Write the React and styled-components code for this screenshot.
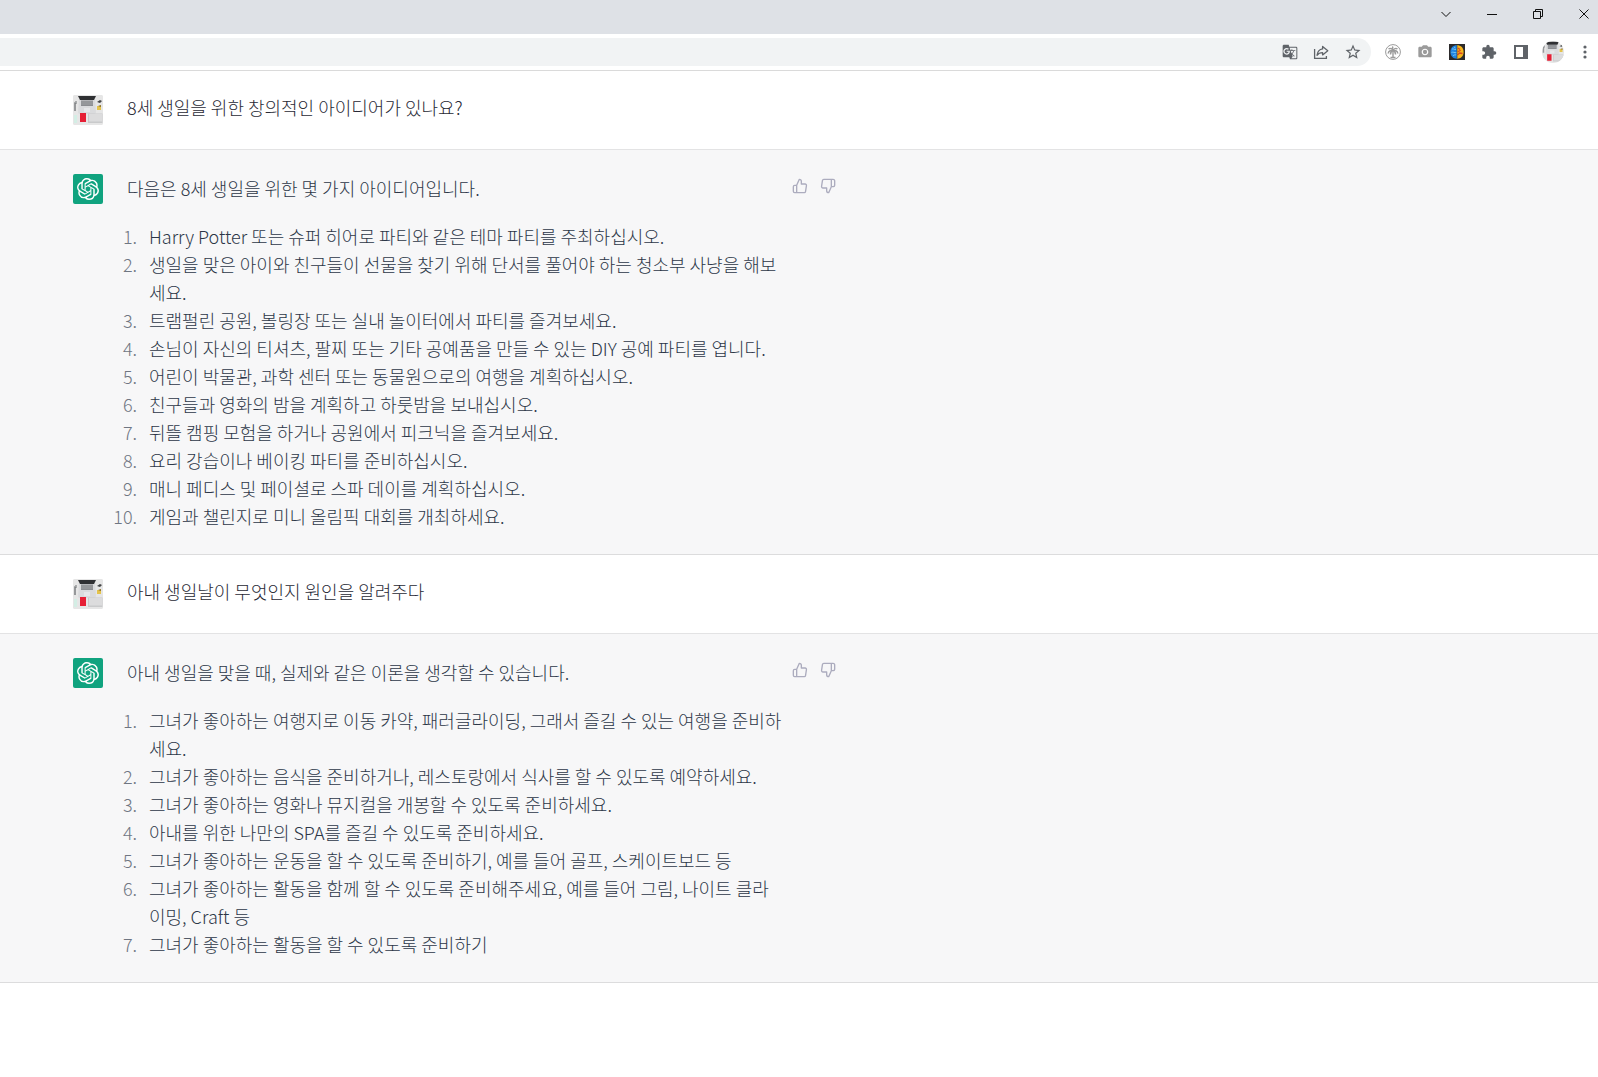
import styled, { createGlobalStyle } from "styled-components";
import { FiThumbsUp, FiThumbsDown } from "react-icons/fi";
import { MdExtension, MdGTranslate, MdPhotoCamera, MdStarBorder } from "react-icons/md";
import { SiOpenai } from "react-icons/si";

const conversation = [
  { role: "user", text: "8세 생일을 위한 창의적인 아이디어가 있나요?" },
  {
    role: "assistant",
    text: "다음은 8세 생일을 위한 몇 가지 아이디어입니다.",
    items: [
      "Harry Potter 또는 슈퍼 히어로 파티와 같은 테마 파티를 주최하십시오.",
      "생일을 맞은 아이와 친구들이 선물을 찾기 위해 단서를 풀어야 하는 청소부 사냥을 해보세요.",
      "트램펄린 공원, 볼링장 또는 실내 놀이터에서 파티를 즐겨보세요.",
      "손님이 자신의 티셔츠, 팔찌 또는 기타 공예품을 만들 수 있는 DIY 공예 파티를 엽니다.",
      "어린이 박물관, 과학 센터 또는 동물원으로의 여행을 계획하십시오.",
      "친구들과 영화의 밤을 계획하고 하룻밤을 보내십시오.",
      "뒤뜰 캠핑 모험을 하거나 공원에서 피크닉을 즐겨보세요.",
      "요리 강습이나 베이킹 파티를 준비하십시오.",
      "매니 페디스 및 페이셜로 스파 데이를 계획하십시오.",
      "게임과 챌린지로 미니 올림픽 대회를 개최하세요.",
    ],
  },
  { role: "user", text: "아내 생일날이 무엇인지 원인을 알려주다" },
  {
    role: "assistant",
    text: "아내 생일을 맞을 때, 실제와 같은 이론을 생각할 수 있습니다.",
    items: [
      "그녀가 좋아하는 여행지로 이동 카약, 패러글라이딩, 그래서 즐길 수 있는 여행을 준비하세요.",
      "그녀가 좋아하는 음식을 준비하거나, 레스토랑에서 식사를 할 수 있도록 예약하세요.",
      "그녀가 좋아하는 영화나 뮤지컬을 개봉할 수 있도록 준비하세요.",
      "아내를 위한 나만의 SPA를 즐길 수 있도록 준비하세요.",
      "그녀가 좋아하는 운동을 할 수 있도록 준비하기, 예를 들어 골프, 스케이트보드 등",
      "그녀가 좋아하는 활동을 함께 할 수 있도록 준비해주세요, 예를 들어 그림, 나이트 클라이밍, Craft 등",
      "그녀가 좋아하는 활동을 할 수 있도록 준비하기",
    ],
  },
];

const DeskPhoto = ({ size }) => (
  <svg width={size} height={size} viewBox="0 0 30 30" aria-hidden="true">
    <rect width="30" height="30" fill="#e6e6e6" />
    <path d="M6 4h16l1 13q0 2-2 2H7q-2 0-2-2z" fill="#dadbdd" />
    <path d="M5 1h18l-2 4H7z" fill="#2f3033" />
    <path d="M8 5.500h12v5.500H8z" fill="#8b8d91" />
    <path d="M8 7h12M8 9h12" stroke="#aeb0b3" strokeWidth=".6" />
    <path d="M11 13h6v4h-6z" fill="#e6e7e9" />
    <path d="M1 7l2 1v8H1z" fill="#96989a" />
    <path d="M3 6v3" stroke="#6d7073" />
    <path d="M24 7l3-2 2 1-2 2z" fill="#444648" />
    <path d="M24 11h4v4h-4z" fill="#e4c34c" />
    <path d="M25 11l3-1v2z" fill="#866b25" />
    <path d="M1 20h3v8H1z" fill="#d4eee5" />
    <path d="M7 18h6v9H7z" fill="#e61f35" />
    <path d="M15 18.500h14.500v9.500H15z" fill="#c9cacb" />
    <path d="M16 19h13v7.500H16z" fill="#dcdcdd" />
  </svg>
);

const ShareIcon = () => (
  <svg width="16" height="16" viewBox="0 0 16 16" fill="none" stroke="#5f6368" strokeWidth="1.300" aria-hidden="true">
    <path d="M1.600 5v9.400h11.800V12" />
    <path d="M9.600 2.500l5.200 4.200-5.200 4.200V8.700c-2.500 0-4.300.8-5.600 2.600.4-3.200 2.200-5.900 5.600-6.400z" strokeLinejoin="round" />
  </svg>
);

const PalmIcon = () => (
  <svg width="16" height="16" viewBox="0 0 16 16" fill="none" stroke="#9b9b9b" aria-hidden="true">
    <circle cx="8" cy="8" r="7.400" />
    <path d="M8 6.500c-1-2-3-2.500-4.500-1.500M8 6.500c1-2 3-2.500 4.500-1.500M8 6.500c-2.500-.5-4.500.8-4.800 3M8 6.500c2.500-.5 4.500.8 4.800 3M8 6.500c-1.600.7-2.600 2-2.500 4M8 6.500c1.600.7 2.600 2 2.500 4M8 6.500c-.8-1.500-.8-3 0-4" strokeWidth="1.500" />
    <path d="M8 6v8M5.500 13.500h5" strokeWidth="1.400" />
  </svg>
);

const BrainIcon = () => (
  <svg width="16" height="16" viewBox="0 0 16 16" aria-hidden="true">
    <rect width="16" height="16" fill="#2c2a2b" />
    <path d="M8 1.300C4 1.300 1.400 4 1.400 8S4 14.700 8 14.700z" fill="#2185e2" />
    <path d="M8 1.300c4 0 6.600 2.700 6.600 6.700S12 14.700 8 14.700z" fill="#f6b61c" />
    <path d="M3 5c2-.5 2.500 1 4 .500M2.500 8.500c1.500-1 3 .7 5 0M4 12c1-1.500 2-1 3.500-1.200M5 3l1.500 1" stroke="#73c5f7" fill="none" />
    <path d="M9 4l2 1.500M9 8c1-2 2-.5 2.500-2M8.500 11l2-2 3 .5" stroke="#dc4724" strokeWidth="1.300" fill="none" />
    <path d="M8 1.500v13" stroke="#363033" strokeWidth=".6" />
  </svg>
);

const SidePanelIcon = () => (
  <svg width="16" height="16" viewBox="0 0 16 16" aria-hidden="true">
    <path fillRule="evenodd" d="M1 1h14v14H1zM3 3v10h7V3z" fill="#5f6368" />
  </svg>
);

const DotsIcon = () => (
  <svg width="16" height="16" viewBox="0 0 16 16" fill="#5f6368" aria-hidden="true">
    <circle cx="8" cy="3" r="1.600" />
    <circle cx="8" cy="8" r="1.600" />
    <circle cx="8" cy="13" r="1.600" />
  </svg>
);

const windowIcons = [
  { label: "탭 검색", d: "M.5 3l4.500 4.500L9.500 3" },
  { label: "최소화", d: "M0 5.500h10" },
  { label: "이전 크기로 복원", d: "M.5 2.500h7v7h-7zM2.500 2.500v-2h7v7h-2" },
  { label: "닫기", d: "M.5.500l9 9M9.500.500l-9 9" },
];

const Message = ({ role, text, items }) => {
  const assistant = role === "assistant";
  return (
    <Row $assistant={assistant}>
      <Inner>
        <Avatar $assistant={assistant}>{assistant ? <SiOpenai size={22} /> : <DeskPhoto size={30} />}</Avatar>
        <Body>
          <Paragraph $assistant={assistant}>{text}</Paragraph>
          {items && (
            <Ideas>
              {items.map((item) => (
                <li key={item}>{item}</li>
              ))}
            </Ideas>
          )}
        </Body>
        {assistant && (
          <Feedback>
            <IconButton aria-label="좋아요">
              <FiThumbsUp />
            </IconButton>
            <IconButton aria-label="싫어요">
              <FiThumbsDown />
            </IconButton>
          </Feedback>
        )}
      </Inner>
    </Row>
  );
};

const App = () => {
  return (
    <>
      <GlobalStyle />
      <header>
        <TitleBar>
          {windowIcons.map(({ label, d }) => (
            <IconButton key={label} aria-label={label}>
              <svg width="10" height="10" viewBox="0 0 10 10" fill="none" stroke="#111" aria-hidden="true">
                <path d={d} />
              </svg>
            </IconButton>
          ))}
        </TitleBar>
        <Toolbar>
          <AddressBar>
            <Address type="text" aria-label="주소창" />
            <IconButton aria-label="번역">
              <MdGTranslate />
            </IconButton>
            <IconButton aria-label="공유">
              <ShareIcon />
            </IconButton>
            <IconButton aria-label="북마크">
              <MdStarBorder size={18} />
            </IconButton>
          </AddressBar>
          <Extensions>
            <IconButton aria-label="Palm">
              <PalmIcon />
            </IconButton>
            <IconButton aria-label="캡처" $color="#9b9b9b">
              <MdPhotoCamera />
            </IconButton>
            <IconButton aria-label="Brain">
              <BrainIcon />
            </IconButton>
            <IconButton aria-label="확장 프로그램">
              <MdExtension />
            </IconButton>
            <IconButton aria-label="측면 패널">
              <SidePanelIcon />
            </IconButton>
            <ProfileButton aria-label="프로필">
              <DeskPhoto size={22} />
            </ProfileButton>
            <IconButton aria-label="메뉴">
              <DotsIcon />
            </IconButton>
          </Extensions>
        </Toolbar>
      </header>
      <main>
        {conversation.map((message) => (
          <Message key={message.text} {...message} />
        ))}
      </main>
    </>
  );
};

const GlobalStyle = createGlobalStyle`
  * {
    box-sizing: border-box;
  }

  body {
    margin: 0;
    background: #fff;
    font-family: "Noto Sans CJK KR", "Noto Sans", sans-serif;
    font-size: 18px;
    font-weight: 300;
  }
`;

const IconButton = styled.button`
  display: flex;
  align-items: center;
  justify-content: center;
  flex: none;
  min-width: 10px;
  padding: 0;
  border: 0;
  background: none;
  color: ${(props) => props.$color || "#5f6368"};
  font-size: 16px;
  cursor: pointer;
`;

const ProfileButton = styled(IconButton)`
  margin: 0 -3px;
  border-radius: 50%;
  overflow: hidden;
`;

const TitleBar = styled.div`
  display: flex;
  align-items: center;
  justify-content: flex-end;
  gap: 36px;
  height: 34px;
  padding: 0 9px 6px 0;
  background: #dee1e6;
`;

const Toolbar = styled.div`
  display: flex;
  align-items: center;
  gap: 14px;
  height: 37px;
  padding: 0 5px 1px 0;
  border-bottom: 1px solid #dadada;
`;

const AddressBar = styled.div`
  display: flex;
  flex: 1;
  align-items: center;
  gap: 15px;
  height: 28px;
  padding-right: 9px;
  border-radius: 0 14px 14px 0;
  background: #f1f3f4;
`;

const Address = styled.input`
  flex: 1;
  min-width: 0;
  border: 0;
  outline: 0;
  background: none;
  font: inherit;
`;

const Extensions = styled.div`
  display: flex;
  align-items: center;
  gap: 16px;
`;

const Row = styled.section`
  padding: 24px 0;
  border-bottom: 1px solid ${(props) => (props.$assistant ? "#dcdcdd" : "#e3e3e4")};
  background: ${(props) => (props.$assistant ? "#f7f7f8" : "#fff")};
  color: ${(props) => (props.$assistant ? "#2c3647" : "#282935")};
`;

const Inner = styled.div`
  display: flex;
  align-items: flex-start;
  max-width: 841px;
  padding-left: 73px;
`;

const Avatar = styled.div`
  display: flex;
  align-items: center;
  justify-content: center;
  flex: none;
  width: 30px;
  height: 30px;
  margin-right: 24px;
  border-radius: 2px;
  overflow: hidden;
  background: ${(props) => (props.$assistant ? "#10a37f" : "#e4e4e4")};
  color: #fff;
`;

const Body = styled.div`
  flex: 1;
  max-width: 655px;
`;

const Paragraph = styled.p`
  margin: 0;
  line-height: ${(props) => (props.$assistant ? "28px" : "24px")};
`;

const Ideas = styled.ol`
  margin: 20px 0 0;
  padding-left: 14px;
  line-height: 28px;

  li {
    padding-left: 8px;
  }

  li::marker {
    color: #6f7682;
  }
`;

const Feedback = styled.div`
  display: flex;
  gap: 12px;
  padding: 4px 0 0 10px;

  ${IconButton} {
    color: #acacbe;
  }
`;

export default App;
